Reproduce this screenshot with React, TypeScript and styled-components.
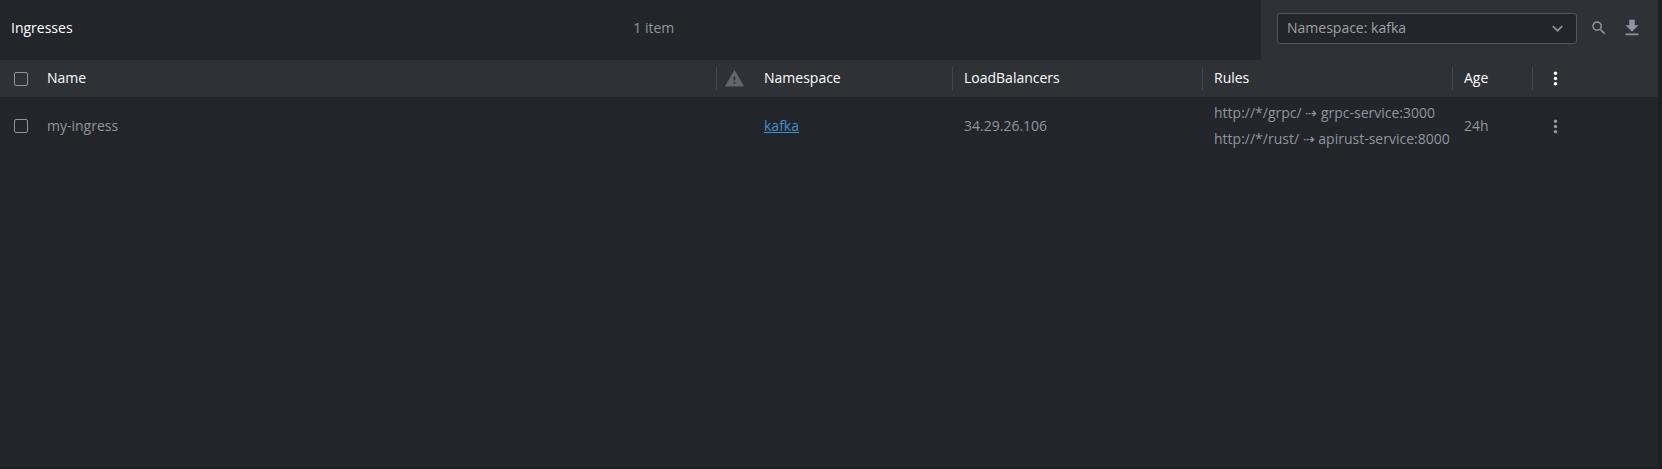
import React from "react";
import styled, { createGlobalStyle } from "styled-components";

const GlobalStyle = createGlobalStyle`
  * { box-sizing: border-box; }
  html, body { margin: 0; background: #1e2124; }
  body, button, select {
    font-family: "Open Sans", "Noto Sans", sans-serif;
    font-size: 14px;
    line-height: 20px;
  }
`;

const Page = styled.div`
  min-height: 100vh;
  padding: 0 4px 2px 0;
  background: #1e2024;
  color: #8e969f;
  display: flex;
`;

const Panel = styled.main`
  flex: 1;
  min-width: 0;
  background: #22252a;
`;

const Toolbar = styled.header`
  display: flex;
  height: 60px;
  align-items: stretch;
`;

const Summary = styled.div`
  flex: 1;
  display: grid;
  grid-template-columns: auto 1fr;
  align-items: center;
  padding: 0 26px 4px 11px;
`;

const Title = styled.h1`
  margin: 0;
  font-size: 14px;
  font-weight: 400;
  color: #ffffff;
`;

const ItemCount = styled.span`
  text-align: center;
`;

const Filters = styled.div`
  display: flex;
  align-items: center;
  background: #2e3136;
  padding: 0 14px 4px 16px;
`;

const SelectBox = styled.div`
  display: grid;
  width: 300px;
  align-items: center;
  margin-right: 10px;

  > * { grid-area: 1 / 1; }
  > svg { justify-self: end; margin-right: 9px; pointer-events: none; }
`;

const NamespaceSelect = styled.select`
  appearance: none;
  width: 100%;
  height: 31px;
  padding: 0 32px 1px 9px;
  border: 1px solid #50565e;
  border-radius: 3px;
  background: #22252a;
  color: #a0a0a0;
`;

const IconButton = styled.button<{ $bright?: boolean }>`
  display: flex;
  align-items: center;
  justify-content: center;
  border: 0;
  padding: 0;
  background: none;
  color: ${(p) => (p.$bright ? "#ffffff" : "#8e96a3")};
  cursor: pointer;
`;

const ToolButton = styled(IconButton)`
  width: 24px;
  height: 24px;
  & + & { margin-left: 9px; }
`;

const Table = styled.table`
  width: 100%;
  table-layout: fixed;
  border-collapse: collapse;
`;

const Col = styled.col<{ $w?: number }>`
  width: ${(p) => (p.$w ? `${p.$w}px` : "auto")};
`;

const HeadRow = styled.tr`
  height: 37px;
  background: #2e3136;
`;

const HeadCell = styled.th<{ $icon?: boolean; $divider?: boolean }>`
  padding: 0 0 1px ${(p) => (p.$icon ? 7 : 11)}px;
  text-align: left;
  font-weight: 400;
  color: #ffffff;
  background: ${(p) =>
    p.$divider
      ? "linear-gradient(#44484e, #44484e) right center / 1px 23px no-repeat"
      : "none"};
`;

const BodyRow = styled.tr`
  height: 62px;
`;

const Cell = styled.td`
  padding: 0 0 5px 11px;
  white-space: nowrap;
`;

const CheckHeadCell = styled.th`
  padding: 0 0 0 14px;
  text-align: left;
`;

const CheckCell = styled.td`
  padding: 0 0 4px 14px;
`;

const Checkbox = styled.input`
  appearance: none;
  display: block;
  width: 14px;
  height: 14px;
  margin: 0;
  border: 1px solid #8e96a3;
  border-radius: 2px;
  &:checked { background: #3d90ce; }
`;

const NamespaceLink = styled.a`
  color: #3d90ce;
  text-decoration: underline;
`;

const Rule = styled.div`
  line-height: 26px;
`;

const MenuHeadCell = styled.th`
  padding: 0 0 0 12px;
  text-align: left;
`;

const MenuCell = styled.td`
  padding: 0 0 4px 12px;
`;

const Svg = styled.svg`
  display: block;
  fill: currentColor;
`;

const DotsIcon = () => (
  <Svg width="21" height="21" viewBox="0 0 24 24" aria-hidden="true">
    <path d="M12 8c1.100 0 2-.9 2-2s-.9-2-2-2-2 .9-2 2 .9 2 2 2zm0 2c-1.100 0-2 .9-2 2s.9 2 2 2 2-.9 2-2-.9-2-2-2zm0 6c-1.100 0-2 .9-2 2s.9 2 2 2 2-.9 2-2-.9-2-2-2z" />
  </Svg>
);

const SearchIcon = () => (
  <Svg width="18" height="18" viewBox="0 0 24 24" aria-hidden="true">
    <path d="M15.500 14h-.79l-.28-.27A6.471 6.471 0 0 0 16 9.500 6.500 6.500 0 1 0 9.500 16c1.610 0 3.090-.59 4.230-1.570l.27.28v.79l5 4.990L20.490 19l-4.990-5zm-6 0C7.010 14 5 11.990 5 9.500S7.010 5 9.500 5 14 7.010 14 9.500 11.990 14 9.500 14z" />
  </Svg>
);

const DownloadIcon = () => (
  <Svg width="22" height="22" viewBox="0 0 24 24" aria-hidden="true">
    <path d="M19 9h-4V3H9v6H5l7 7 7-7zM5 18v2h14v-2H5z" />
  </Svg>
);

const WarningIcon = () => (
  <Svg width="21" height="21" viewBox="0 0 24 24" color="#62666b" role="img" aria-label="Warnings">
    <path d="M1 21h22L12 2 1 21zm12-3h-2v-2h2v2zm0-4h-2v-4h2v4z" />
  </Svg>
);

const ChevronIcon = () => (
  <Svg width="21" height="21" viewBox="0 0 24 24" color="#8e96a3" aria-hidden="true">
    <path d="M7.410 8.590 12 13.170l4.590-4.580L18 10l-6 6-6-6z" />
  </Svg>
);

const ingresses = [
  {
    name: "my-ingress",
    namespace: "kafka",
    loadBalancers: "34.29.26.106",
    rules: [
      "http://*/grpc/ ⇢ grpc-service:3000",
      "http://*/rust/ ⇢ apirust-service:8000",
    ],
    age: "24h",
  },
];

export default function App() {
  return (
    <>
      <GlobalStyle />
      <Page>
        <Panel>
          <Toolbar>
            <Summary>
              <Title>Ingresses</Title>
              <ItemCount>1 item</ItemCount>
            </Summary>
            <Filters>
              <SelectBox>
                <NamespaceSelect aria-label="Namespace filter" defaultValue="kafka">
                  <option value="kafka">Namespace: kafka</option>
                </NamespaceSelect>
                <ChevronIcon />
              </SelectBox>
              <ToolButton type="button" aria-label="Search"><SearchIcon /></ToolButton>
              <ToolButton type="button" aria-label="Download"><DownloadIcon /></ToolButton>
            </Filters>
          </Toolbar>
          <Table>
            <colgroup>
              <Col $w={36} />
              <Col />
              <Col $w={36} />
              <Col $w={200} />
              <Col $w={250} />
              <Col $w={250} />
              <Col $w={80} />
              <Col $w={125} />
            </colgroup>
            <thead>
              <HeadRow>
                <CheckHeadCell><Checkbox type="checkbox" aria-label="Select all" /></CheckHeadCell>
                <HeadCell $divider>Name</HeadCell>
                <HeadCell $icon><WarningIcon /></HeadCell>
                <HeadCell $divider>Namespace</HeadCell>
                <HeadCell $divider>LoadBalancers</HeadCell>
                <HeadCell $divider>Rules</HeadCell>
                <HeadCell $divider>Age</HeadCell>
                <MenuHeadCell>
                  <IconButton type="button" $bright aria-label="Columns"><DotsIcon /></IconButton>
                </MenuHeadCell>
              </HeadRow>
            </thead>
            <tbody>
              {ingresses.map((item) => (
                <BodyRow key={item.name}>
                  <CheckCell><Checkbox type="checkbox" aria-label={`Select ${item.name}`} /></CheckCell>
                  <Cell>{item.name}</Cell>
                  <Cell />
                  <Cell><NamespaceLink href="#kafka">{item.namespace}</NamespaceLink></Cell>
                  <Cell>{item.loadBalancers}</Cell>
                  <Cell>{item.rules.map((rule) => <Rule key={rule}>{rule}</Rule>)}</Cell>
                  <Cell>{item.age}</Cell>
                  <MenuCell>
                    <IconButton type="button" aria-label="Actions"><DotsIcon /></IconButton>
                  </MenuCell>
                </BodyRow>
              ))}
            </tbody>
          </Table>
        </Panel>
      </Page>
    </>
  );
}
